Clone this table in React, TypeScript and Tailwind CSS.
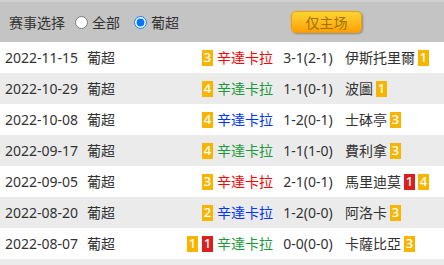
import React from "react";

type Badge = { n: string; c: "y" | "r" };
type Row = {
  date: string;
  home: string;
  homeColor: string;
  homeBadges: Badge[];
  score: string;
  away: string;
  awayBadges: Badge[];
};

const rows: Row[] = [
  { date: "2022-11-15", home: "辛達卡拉", homeColor: "text-[#ff0000]", homeBadges: [{ n: "3", c: "y" }], score: "3-1(2-1)", away: "伊斯托里爾", awayBadges: [{ n: "1", c: "y" }] },
  { date: "2022-10-29", home: "辛達卡拉", homeColor: "text-[#1a9a3a]", homeBadges: [{ n: "4", c: "y" }], score: "1-1(0-1)", away: "波圖", awayBadges: [{ n: "1", c: "y" }] },
  { date: "2022-10-08", home: "辛達卡拉", homeColor: "text-[#0033ff]", homeBadges: [{ n: "4", c: "y" }], score: "1-2(0-1)", away: "士砵亭", awayBadges: [{ n: "3", c: "y" }] },
  { date: "2022-09-17", home: "辛達卡拉", homeColor: "text-[#1a9a3a]", homeBadges: [{ n: "4", c: "y" }], score: "1-1(1-0)", away: "費利拿", awayBadges: [{ n: "3", c: "y" }] },
  { date: "2022-09-05", home: "辛達卡拉", homeColor: "text-[#ff0000]", homeBadges: [{ n: "3", c: "y" }], score: "2-1(0-1)", away: "馬里迪莫", awayBadges: [{ n: "1", c: "r" }, { n: "4", c: "y" }] },
  { date: "2022-08-20", home: "辛達卡拉", homeColor: "text-[#0033ff]", homeBadges: [{ n: "2", c: "y" }], score: "1-2(0-0)", away: "阿洛卡", awayBadges: [{ n: "3", c: "y" }] },
  { date: "2022-08-07", home: "辛達卡拉", homeColor: "text-[#1a9a3a]", homeBadges: [{ n: "1", c: "y" }, { n: "1", c: "r" }], score: "0-0(0-0)", away: "卡薩比亞", awayBadges: [{ n: "3", c: "y" }] },
];

function B({ b }: { b: Badge }) {
  return (
    <span
      className={
        "inline-flex h-[16px] w-[11px] items-center justify-center text-[13px] font-medium leading-none text-white " +
        (b.c === "y" ? "bg-[#f8b500]" : "bg-[#d9201f]")
      }
    >
      {b.n}
    </span>
  );
}

export default function App() {
  return (
    <div
      className="w-[444px] h-[265px] overflow-hidden bg-white text-[14px] text-[#333]"
      style={{ fontFamily: '"Noto Sans", "Noto Sans CJK SC", sans-serif' }}
    >
      <div className="flex h-[42px] items-center bg-[#c4c4c4] border-t-2 border-[#cfcfcf]">
        <span className="ml-[9px]">赛事选择</span>
        <label className="ml-[10px] flex items-center">
          <input type="radio" name="m" className="m-0 h-[13px] w-[13px]" />
          <span className="ml-[4px]">全部</span>
        </label>
        <label className="ml-[14px] flex items-center">
          <input type="radio" name="m" defaultChecked className="m-0 h-[13px] w-[13px]" />
          <span className="ml-[4px]">葡超</span>
        </label>
        <button className="ml-[112px] flex h-[22px] w-[71px] items-center justify-center rounded-[5px] border border-[#f0a000] bg-gradient-to-b from-[#ffd530] to-[#ffa000] text-[14px] text-[#9a7300] shadow-[1px_1px_2px_rgba(0,0,0,0.3)]">
          仅主场
        </button>
      </div>
      {rows.map((r, i) => (
        <div
          key={i}
          className={"flex h-[31px] items-center " + (i % 2 === 1 ? "bg-[#ebebeb]" : "bg-white")}
        >
          <div className="w-[87px] pl-[5px]">{r.date}</div>
          <div className="w-[60px]">葡超</div>
          <div className="flex w-[130px] items-center justify-end gap-[4px] pr-[4px]">
            {r.homeBadges.map((b, j) => (
              <B key={j} b={b} />
            ))}
            <span className={r.homeColor}>{r.home}</span>
          </div>
          <div className="w-[62px] text-center">{r.score}</div>
          <div className="flex items-center gap-[3px] pl-[6px]">
            <span>{r.away}</span>
            {r.awayBadges.map((b, j) => (
              <B key={j} b={b} />
            ))}
          </div>
        </div>
      ))}
      <div className="h-[31px] bg-[#ebebeb]" />
    </div>
  );
}
